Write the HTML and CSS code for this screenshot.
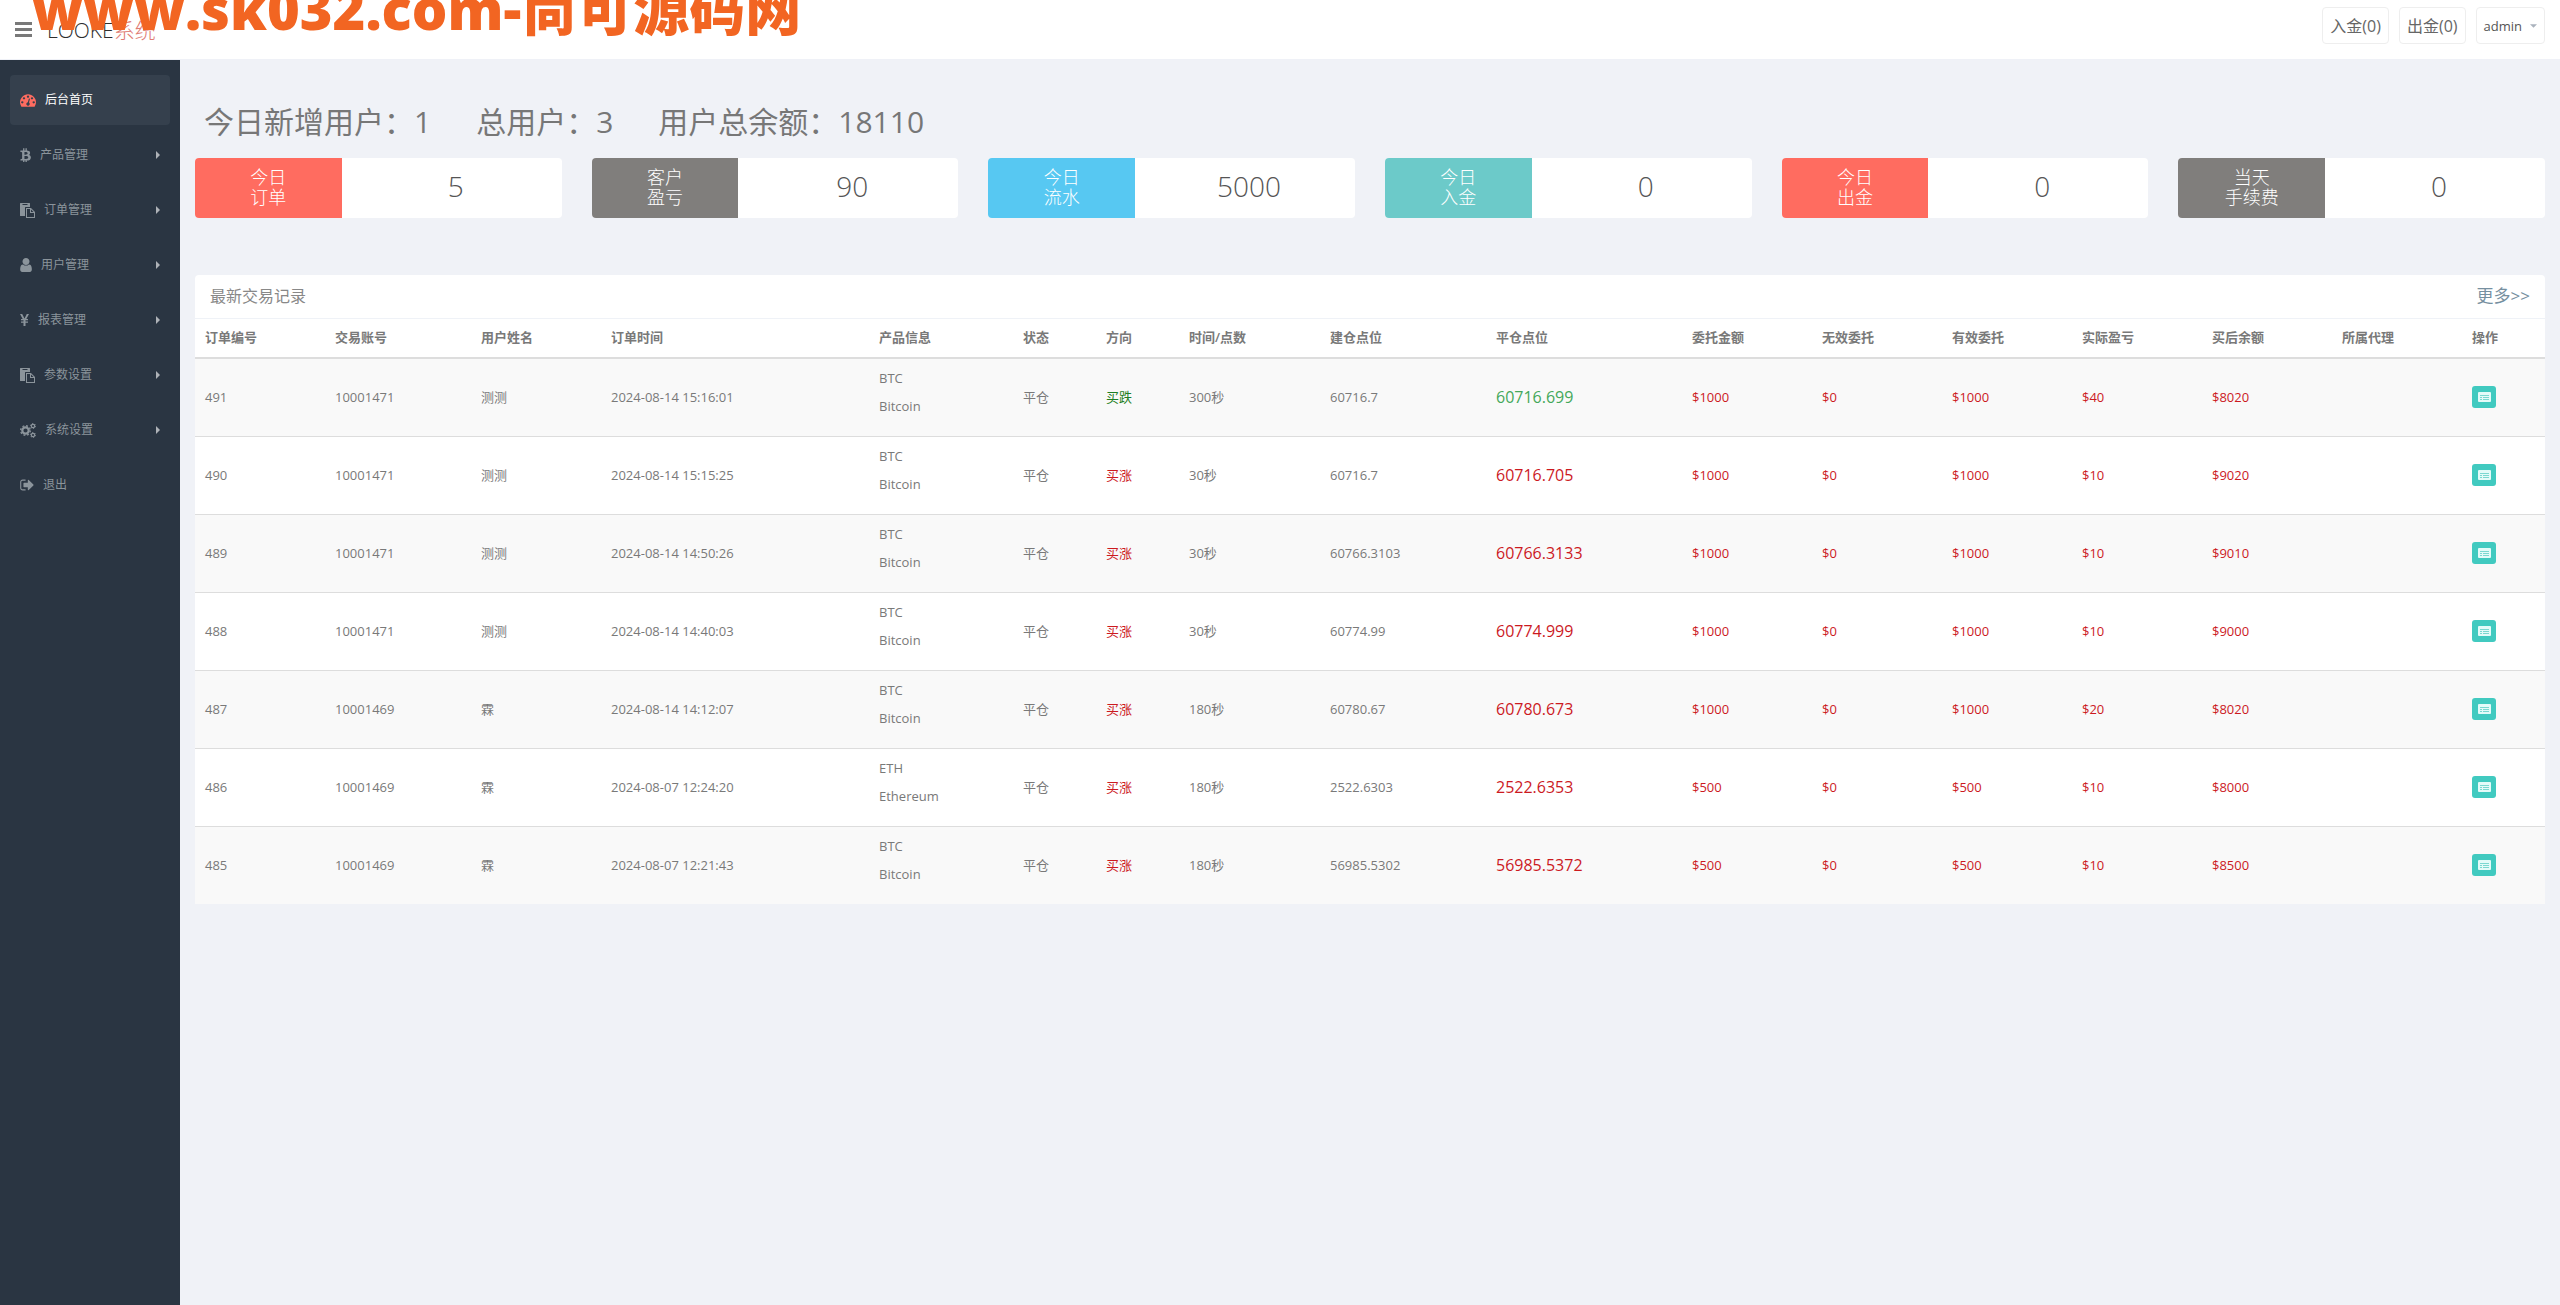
FILE: index.html
```html
<!DOCTYPE html>
<html lang="zh-CN">
<head>
<meta charset="utf-8">
<title>后台首页</title>
<meta name="viewport" content="width=device-width, initial-scale=1">
<link rel="stylesheet" href="styles.css">
</head>
<body>
<svg class="sprite" aria-hidden="true">
  <symbol id="i-paste" viewBox="0 0 15 15">
    <path d="M.5 0h9q.5 0 .5.500V4H5.500q-.500 0-.500.500V13H.5q-.5 0-.5-.5V.5q0-.5.5-.5z"/><path class="cut" d="M2.500 1h5v1h-5z"/>
    <path d="M6 5h5l4 4v6H6zm1 1v8h7V10h-4V6zm4 .5V9h2.500z" fill-rule="evenodd"/>
  </symbol>
  <symbol id="i-caret" viewBox="0 0 4 8"><path d="M0 0l4 4-4 4z"/></symbol>
  <symbol id="i-list" viewBox="0 0 13 10">
    <path d="M1 0h11q1 0 1 1v8q0 1-1 1H1q-1 0-1-1V1q0-1 1-1z"/><path class="lines" d="M2 3h9v1H2zm0 2h2v1H2zm3 0h6v1H5zM2 7h2v1H2zm3 0h6v1H5z"/>
  </symbol>
</svg>

<header class="topbar">
  <button class="menu-toggle" type="button" aria-label="菜单"><span></span><span></span><span></span></button>
  <a class="logo" href="#">LOOKE<span>系统</span></a>
  <nav class="topnav">
    <a class="pill" href="#">入金(0)</a>
    <a class="pill" href="#">出金(0)</a>
    <button class="pill account" type="button">admin<svg width="7" height="4" viewBox="0 0 8 4"><path d="M0 0h8L4 4z"/></svg></button>
  </nav>
</header>
<div class="watermark">www.sk032.com-尚可源码网</div>

<div class="shell">
  <nav class="sidebar">
    <a class="item active" href="#"><svg width="16" height="14" viewBox="0 128 1792 1536"><path d="M384 1152q0-53-37.500-90.500t-90.500-37.500-90.500 37.500-37.500 90.500 37.500 90.500 90.500 37.500 90.500-37.500 37.500-90.500zm192-448q0-53-37.500-90.500t-90.500-37.500-90.500 37.500-37.500 90.500 37.500 90.500 90.500 37.500 90.500-37.500 37.500-90.500zm428 481l101-382q6-26-7.500-48.500t-38.500-29.500-48 6.500-30 39.500l-101 382q-60 5-107 43.500t-63 98.500q-20 77 20 146t117 89 146-20 89-117q16-60-6-117t-72-91zm660-33q0-53-37.500-90.500t-90.500-37.500-90.500 37.500-37.500 90.500 37.500 90.500 90.500 37.500 90.500-37.500 37.500-90.500zm-640-640q0-53-37.500-90.500t-90.500-37.500-90.500 37.500-37.500 90.500 37.500 90.500 90.500 37.500 90.500-37.500 37.500-90.500zm448 192q0-53-37.500-90.500t-90.500-37.500-90.500 37.500-37.500 90.500 37.500 90.500 90.500 37.500 90.500-37.500 37.500-90.500zm320 448q0 261-141 483-19 29-54 29h-1402q-35 0-54-29-141-221-141-483 0-182 71-348t191-286 286-191 348-71 348 71 286 191 191 286 71 348z"/></svg>后台首页</a>
    <a class="item" href="#"><svg width="11" height="14" viewBox="270 128 1260 1600"><path d="M1424 670q18 182-131 258 117 28 175 103t45 214q-7 71-32.500 125t-64.500 89-97 58.500-121.500 34.500-145.500 15v255h-154v-251q-80 0-122-1v252h-154v-255q-18 0-54-.5t-55-.5h-200l31-183h111q50 0 58-51v-402h16q-6-1-16-1v-287q-13-68-89-68h-111v-164l212 1q64 0 97-1v-252h154v247q82-2 122-2v-245h154v252q79 7 140 22.500t113 45 82.500 78 36.500 114.500zm-215 545q0-36-15-64t-37-46-57.500-30.500-65.500-18.500-74-9-69-3-64.500 1-47.500 1v338q8 0 37 .5t48 .5 53-1.500 58.500-4 57-8.500 55.500-14 47.500-21 39.500-30 24.500-40 9.500-51zm-71-476q0-33-12.500-58.500t-30.500-42-48-28-55-16.500-61.500-8-58-2.500-54 1-39.500.5v307q5 0 34.500.5t46.500 0 50-2 55-5.500 51.500-11 48.500-18.500 37-27 27-38.500 9-51z"/></svg>产品管理<svg class="arrow" width="4" height="8"><use href="#i-caret"/></svg></a>
    <a class="item" href="#"><svg width="15" height="15"><use href="#i-paste"/></svg>订单管理<svg class="arrow" width="4" height="8"><use href="#i-caret"/></svg></a>
    <a class="item" href="#"><svg width="12" height="14" viewBox="256 128 1280 1536"><path d="M1536 1399q0 109-62.500 187t-150.500 78h-854q-88 0-150.500-78t-62.500-187q0-85 8.500-160.500t31.500-152 58.500-131 94-89 134.500-34.500q131 128 313 128t313-128q76 0 134.500 34.500t94 89 58.500 131 31.500 152 8.500 160.500zm-256-887q0 159-112.500 271.500t-271.500 112.500-271.500-112.500-112.500-271.500 112.500-271.500 271.500-112.500 271.500 112.500 112.500 271.500z"/></svg>用户管理<svg class="arrow" width="4" height="8"><use href="#i-caret"/></svg></a>
    <a class="item" href="#"><svg width="9" height="14" viewBox="0 0 9 14"><path d="M0 1h2.200L4.500 5.500 6.800 1H9L6.300 6H8v1.200H5.500v1.300H8v1.200H5.500V13h-2V9.700H1V8.500h2.500V7.200H1V6h1.700z"/></svg>报表管理<svg class="arrow" width="4" height="8"><use href="#i-caret"/></svg></a>
    <a class="item" href="#"><svg width="15" height="15"><use href="#i-paste"/></svg>参数设置<svg class="arrow" width="4" height="8"><use href="#i-caret"/></svg></a>
    <a class="item" href="#"><svg class="gears" width="16" height="15" viewBox="0 0 16 15"><circle cx="5.500" cy="7.500" r="3.200" stroke-width="2.200"/><circle cx="5.500" cy="7.500" r="4.800" stroke-width="1.400" stroke-dasharray="1.900 1.870"/><circle cx="13" cy="3" r="1.700" stroke-width="1.200"/><circle cx="13" cy="3" r="2.500" stroke-width="1" stroke-dasharray="1.300 1.310"/><circle cx="13" cy="12" r="1.700" stroke-width="1.200"/><circle cx="13" cy="12" r="2.500" stroke-width="1" stroke-dasharray="1.300 1.310"/></svg>系统设置<svg class="arrow" width="4" height="8"><use href="#i-caret"/></svg></a>
    <a class="item" href="#"><svg width="14" height="12" viewBox="64 192 1600 1408"><path d="M704 1440q0 4 1 20t.5 26.500-3 23.500-10 19.500-20.500 6.500h-320q-119 0-203.500-84.500t-84.500-203.500v-704q0-119 84.500-203.500t203.500-84.500h320q13 0 22.500 9.500t9.500 22.500q0 4 1 20t.5 26.500-3 23.500-10 19.500-20.500 6.500h-320q-66 0-113 47t-47 113v704q0 66 47 113t113 47h312l11.500 1 11.500 3 8 5.500 7 9 2 13.500zm928-544q0 26-19 45l-544 544q-19 19-45 19t-45-19-19-45v-288h-448q-26 0-45-19t-19-45v-384q0-26 19-45t45-19h448v-288q0-26 19-45t45-19 45 19l544 544q19 19 19 45z"/></svg>退出</a>
  </nav>

  <main class="content">
    <div class="summary"><span>今日新增用户：1</span><span>总用户：3</span><span>用户总余额：18110</span></div>

    <section class="cards">
      <div class="card"><div class="label coral">今日<br>订单</div><div class="value">5</div></div>
      <div class="card"><div class="label gray">客户<br>盈亏</div><div class="value">90</div></div>
      <div class="card"><div class="label sky">今日<br>流水</div><div class="value">5000</div></div>
      <div class="card"><div class="label teal">今日<br>入金</div><div class="value">0</div></div>
      <div class="card"><div class="label coral">今日<br>出金</div><div class="value">0</div></div>
      <div class="card"><div class="label gray">当天<br>手续费</div><div class="value">0</div></div>
    </section>

    <section class="panel">
      <header class="panel-head"><span>最新交易记录</span><a href="#">更多&gt;&gt;</a></header>
      <table class="orders">
        <colgroup>
          <col class="w-m"><col class="w-account"><col class="w-m"><col class="w-time"><col class="w-product"><col class="w-s"><col class="w-s"><col class="w-period"><col class="w-open"><col class="w-close"><col class="w-m"><col class="w-m"><col class="w-m"><col class="w-m"><col class="w-m"><col class="w-m"><col class="w-s">
        </colgroup>
        <thead>
          <tr><th>订单编号</th><th>交易账号</th><th>用户姓名</th><th>订单时间</th><th>产品信息</th><th>状态</th><th>方向</th><th>时间/点数</th><th>建仓点位</th><th>平仓点位</th><th>委托金额</th><th>无效委托</th><th>有效委托</th><th>实际盈亏</th><th>买后余额</th><th>所属代理</th><th>操作</th></tr>
        </thead>
        <tbody>
          <tr><td>491</td><td>10001471</td><td>测测</td><td>2024-08-14 15:16:01</td><td><p>BTC</p><p>Bitcoin</p></td><td>平仓</td><td class="down">买跌</td><td>300秒</td><td>60716.7</td><td class="price fell">60716.699</td><td class="up">$1000</td><td class="up">$0</td><td class="up">$1000</td><td class="up">$40</td><td class="up">$8020</td><td></td><td><button class="detail" type="button" aria-label="详情"><svg width="13" height="10"><use href="#i-list"/></svg></button></td></tr>
          <tr><td>490</td><td>10001471</td><td>测测</td><td>2024-08-14 15:15:25</td><td><p>BTC</p><p>Bitcoin</p></td><td>平仓</td><td class="up">买涨</td><td>30秒</td><td>60716.7</td><td class="price up">60716.705</td><td class="up">$1000</td><td class="up">$0</td><td class="up">$1000</td><td class="up">$10</td><td class="up">$9020</td><td></td><td><button class="detail" type="button" aria-label="详情"><svg width="13" height="10"><use href="#i-list"/></svg></button></td></tr>
          <tr><td>489</td><td>10001471</td><td>测测</td><td>2024-08-14 14:50:26</td><td><p>BTC</p><p>Bitcoin</p></td><td>平仓</td><td class="up">买涨</td><td>30秒</td><td>60766.3103</td><td class="price up">60766.3133</td><td class="up">$1000</td><td class="up">$0</td><td class="up">$1000</td><td class="up">$10</td><td class="up">$9010</td><td></td><td><button class="detail" type="button" aria-label="详情"><svg width="13" height="10"><use href="#i-list"/></svg></button></td></tr>
          <tr><td>488</td><td>10001471</td><td>测测</td><td>2024-08-14 14:40:03</td><td><p>BTC</p><p>Bitcoin</p></td><td>平仓</td><td class="up">买涨</td><td>30秒</td><td>60774.99</td><td class="price up">60774.999</td><td class="up">$1000</td><td class="up">$0</td><td class="up">$1000</td><td class="up">$10</td><td class="up">$9000</td><td></td><td><button class="detail" type="button" aria-label="详情"><svg width="13" height="10"><use href="#i-list"/></svg></button></td></tr>
          <tr><td>487</td><td>10001469</td><td>霖</td><td>2024-08-14 14:12:07</td><td><p>BTC</p><p>Bitcoin</p></td><td>平仓</td><td class="up">买涨</td><td>180秒</td><td>60780.67</td><td class="price up">60780.673</td><td class="up">$1000</td><td class="up">$0</td><td class="up">$1000</td><td class="up">$20</td><td class="up">$8020</td><td></td><td><button class="detail" type="button" aria-label="详情"><svg width="13" height="10"><use href="#i-list"/></svg></button></td></tr>
          <tr><td>486</td><td>10001469</td><td>霖</td><td>2024-08-07 12:24:20</td><td><p>ETH</p><p>Ethereum</p></td><td>平仓</td><td class="up">买涨</td><td>180秒</td><td>2522.6303</td><td class="price up">2522.6353</td><td class="up">$500</td><td class="up">$0</td><td class="up">$500</td><td class="up">$10</td><td class="up">$8000</td><td></td><td><button class="detail" type="button" aria-label="详情"><svg width="13" height="10"><use href="#i-list"/></svg></button></td></tr>
          <tr><td>485</td><td>10001469</td><td>霖</td><td>2024-08-07 12:21:43</td><td><p>BTC</p><p>Bitcoin</p></td><td>平仓</td><td class="up">买涨</td><td>180秒</td><td>56985.5302</td><td class="price up">56985.5372</td><td class="up">$500</td><td class="up">$0</td><td class="up">$500</td><td class="up">$10</td><td class="up">$8500</td><td></td><td><button class="detail" type="button" aria-label="详情"><svg width="13" height="10"><use href="#i-list"/></svg></button></td></tr>
        </tbody>
      </table>
    </section>
  </main>
</div>
</body>
</html>
```
FILE: styles.css
```css
* { box-sizing: border-box; }

body {
  margin: 0;
  min-height: 100vh;
  display: flex;
  flex-direction: column;
  background: #f0f2f7;
  color: #797979;
  font: 13px/18px "Open Sans", "Noto Sans CJK SC", sans-serif;
}

a { color: inherit; text-decoration: none; }
button { font: inherit; color: inherit; cursor: pointer; }
svg { fill: currentColor; flex: none; }
.sprite { position: absolute; width: 0; height: 0; }

/* top bar */
.topbar {
  display: flex;
  align-items: center;
  height: 60px;
  padding: 0 15px;
  background: #fff;
  border-bottom: 1px solid #eff1f7;
}
.menu-toggle {
  display: flex;
  flex-direction: column;
  gap: 3px;
  width: 17px;
  margin-right: 15px;
  padding: 0;
  border: 0;
  background: none;
}
.menu-toggle span { height: 3px; background: #797979; }
.logo { font-size: 21px; line-height: 30px; color: #2e2e2e; font-weight: 300; }
.logo span { color: #e07a72; }
.topnav { display: flex; gap: 10px; margin-left: auto; padding-bottom: 8px; }
.pill {
  display: flex;
  align-items: center;
  height: 37px;
  padding: 0 7px;
  border: 1px solid #eee;
  border-radius: 4px;
  background: #fff;
  font-size: 16px;
  color: #666;
}
.account { gap: 8px; font-size: 13px; color: #555; }
.account svg { color: #aab2bd; }

.watermark {
  position: absolute;
  top: -16px;
  left: 32px;
  font-size: 56px;
  font-weight: 800;
  line-height: 48px;
  color: #f26522;
  white-space: nowrap;
  pointer-events: none;
}

.shell { display: flex; flex: 1; }

/* sidebar */
.sidebar {
  display: flex;
  flex-direction: column;
  gap: 5px;
  flex: 0 0 180px;
  padding: 15px 10px;
  background: #2a3542;
}
.item {
  display: flex;
  align-items: center;
  gap: 9px;
  height: 50px;
  padding: 0 10px;
  border-radius: 4px;
  font-size: 12px;
  color: #8b949b;
}
.item.active { background: #35404d; color: #fff; }
.item.active svg { color: #ff6c60; }
.item .arrow { margin-left: auto; color: #aeb2b7; }
.cut { fill: #2a3542; }
.gears { fill: none; stroke: currentColor; }

/* content */
.content { flex: 1; min-width: 0; padding: 15px; }
.summary {
  display: flex;
  gap: 45px;
  padding: 30px 9px 20px;
  font-size: 30px;
  line-height: 33px;
  color: #777;
}
.cards {
  display: grid;
  grid-template-columns: repeat(6, 1fr);
  gap: 30px;
  margin-bottom: 57px;
}
.card {
  display: flex;
  height: 60px;
  border-radius: 4px;
  background: #fff;
  overflow: hidden;
}
.label, .value { display: flex; align-items: center; justify-content: center; }
.label {
  flex: 0 0 40%;
  padding-bottom: 2px;
  font-size: 18px;
  line-height: 20px;
  font-weight: 300;
  text-align: center;
  color: #fff;
}
.value {
  flex: 1;
  padding: 0 0 4px 8px;
  font-size: 28px;
  font-weight: 300;
  color: #555;
}
.coral { background: #ff6c60; }
.gray { background: #807e7c; }
.sky { background: #57c8f2; }
.teal { background: #6ccac9; }

.panel { background: #fff; border-radius: 4px; }
.panel-head {
  display: flex;
  align-items: center;
  justify-content: space-between;
  height: 44px;
  padding: 0 15px 2px;
  border-bottom: 1px solid #eff2f7;
  font-size: 16px;
  color: #888;
}
.panel-head a { font-size: 17px; color: #768fa0; }

/* orders table */
.orders { width: 100%; table-layout: fixed; border-collapse: separate; border-spacing: 0; }
.w-s { width: 83px; }
.w-m { width: 130px; }
.w-account { width: 146px; }
.w-time { width: 268px; }
.w-product { width: 144px; }
.w-period { width: 141px; }
.w-open { width: 166px; }
.w-close { width: 196px; }
th, td { text-align: left; vertical-align: middle; white-space: nowrap; }
th { padding: 9px 10px 11px; border-bottom: 2px solid #ddd; font-weight: 600; }
td { height: 78px; padding: 0 10px 2px; border-bottom: 1px solid #ddd; }
tbody tr:last-child td { height: 77px; border-bottom: 0; }
tbody tr:nth-child(odd) { background: #f9f9f9; }
td p { margin: 0 0 10px; }
td.price { font-size: 16px; }
.up { color: #cc1a1f; }
.down { color: #1e7e24; }
.fell { color: #44a85a; }
.detail {
  display: flex;
  align-items: center;
  justify-content: center;
  width: 24px;
  height: 22px;
  padding: 0;
  border: 0;
  border-radius: 3px;
  background: #41cac0;
  color: #e4fbf9;
}
.lines { fill: #7bd8d0; }
```
